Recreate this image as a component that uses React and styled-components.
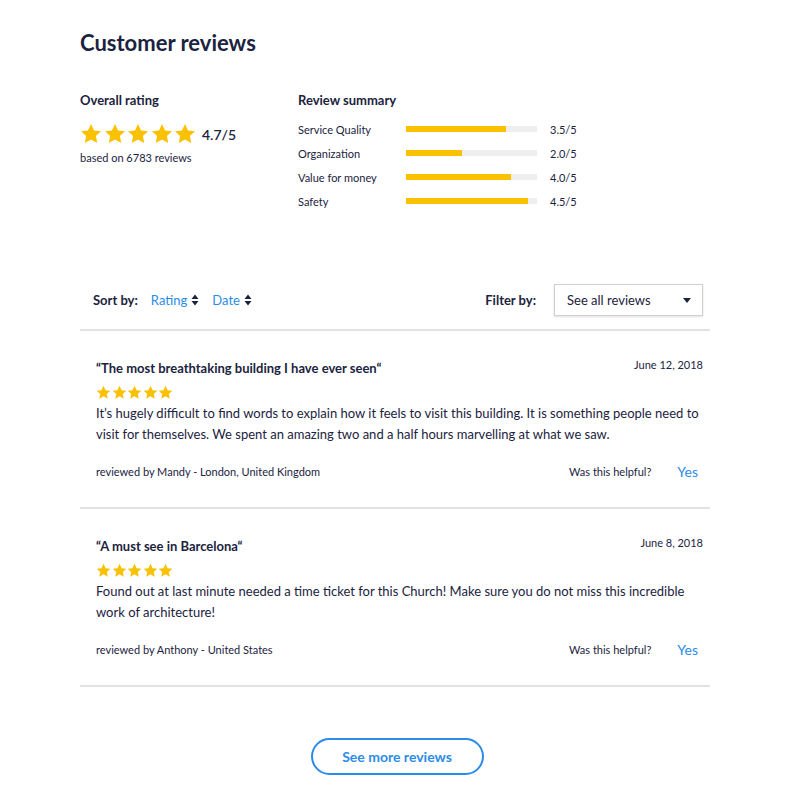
import React from 'react';
import styled, { createGlobalStyle } from 'styled-components';

const GlobalStyle = createGlobalStyle`
  body {
    margin: 0;
    background: #fff;
    font-family: "Lato", "Noto Sans", sans-serif;
    color: #1b2340;
  }
`;

const summary = [
  { label: 'Service Quality', value: '3.5/5', fill: 76 },
  { label: 'Organization', value: '2.0/5', fill: 43 },
  { label: 'Value for money', value: '4.0/5', fill: 80 },
  { label: 'Safety', value: '4.5/5', fill: 93 },
];

const reviews = [
  {
    title: '“The most breathtaking building I have ever seen“',
    date: 'June 12, 2018',
    body: 'It’s hugely difficult to find words to explain how it feels to visit this building. It is something people need to visit for themselves. We spent an amazing two and a half hours marvelling at what we saw.',
    author: 'reviewed by Mandy - London, United Kingdom',
  },
  {
    title: '“A must see in Barcelona“',
    date: 'June 8, 2018',
    body: 'Found out at last minute needed a time ticket for this Church! Make sure you do not miss this incredible work of architecture!',
    author: 'reviewed by Anthony - United States',
  },
];

const Star = ({ size }) => (
  <svg width={size} height={size} viewBox="0 0 24 24">
    <path
      fill="#f9c100"
      d="M12 1.2l3.3 7 7.6.9-5.6 5.2 1.5 7.5L12 18l-6.8 3.8 1.5-7.5L1.1 9.1l7.6-.9z"
    />
  </svg>
);

const Stars = ({ size, gap }) => (
  <StarRow $gap={gap}>
    {[0, 1, 2, 3, 4].map((i) => (
      <Star key={i} size={size} />
    ))}
  </StarRow>
);

const SortIcon = () => (
  <svg width="8" height="12" viewBox="0 0 8 12">
    <path fill="#1b2340" d="M4 0.5L7.5 5H0.5z M4 11.5L0.5 7H7.5z" />
  </svg>
);

const App = () => {
  return (
    <Page>
      <GlobalStyle />
      <Title>Customer reviews</Title>

      <Top>
        <Overall>
          <SectionHead>Overall rating</SectionHead>
          <RatingLine>
            <Stars size={22} gap={1.5} />
            <BigScore>4.7/5</BigScore>
          </RatingLine>
          <Based>based on 6783 reviews</Based>
        </Overall>

        <Summary>
          <SectionHead>Review summary</SectionHead>
          <SummaryList>
            {summary.map((s) => (
              <SummaryRow key={s.label}>
                <SummaryLabel>{s.label}</SummaryLabel>
                <Bar>
                  <BarFill style={{ width: `${s.fill}%` }} />
                </Bar>
                <SummaryValue>{s.value}</SummaryValue>
              </SummaryRow>
            ))}
          </SummaryList>
        </Summary>
      </Top>

      <Toolbar>
        <SortGroup>
          <ToolLabel>Sort by:</ToolLabel>
          <SortLink>
            Rating <SortIcon />
          </SortLink>
          <SortLink>
            Date <SortIcon />
          </SortLink>
        </SortGroup>
        <FilterGroup>
          <ToolLabel>Filter by:</ToolLabel>
          <Select>
            <span>See all reviews</span>
            <Caret />
          </Select>
        </FilterGroup>
      </Toolbar>

      {reviews.map((r) => (
        <Review key={r.date}>
          <ReviewHead>
            <ReviewTitle>{r.title}</ReviewTitle>
            <ReviewDate>{r.date}</ReviewDate>
          </ReviewHead>
          <Stars size={15} gap={0.5} />
          <ReviewBody>{r.body}</ReviewBody>
          <ReviewFoot>
            <Small>{r.author}</Small>
            <Helpful>
              <Small>Was this helpful?</Small>
              <YesLink>Yes</YesLink>
            </Helpful>
          </ReviewFoot>
        </Review>
      ))}

      <MoreWrap>
        <MoreButton>See more reviews</MoreButton>
      </MoreWrap>
    </Page>
  );
};

export default App;

const Page = styled.div`
  width: 630px;
  margin-left: 80px;
  padding-top: 28px;
  padding-bottom: 30px;
`;

const Title = styled.h1`
  margin: 0;
  font-size: 22px;
  line-height: 30px;
  font-weight: 700;
  color: #1b2340;
`;

const Top = styled.div`
  display: flex;
  margin-top: 33px;
`;

const Overall = styled.div`
  width: 218px;
`;

const SectionHead = styled.h2`
  margin: 0;
  font-size: 13px;
  line-height: 18px;
  font-weight: 700;
`;

const RatingLine = styled.div`
  display: flex;
  align-items: center;
  gap: 6px;
  margin-top: 14px;
`;

const StarRow = styled.div`
  display: flex;
  gap: ${(p) => p.$gap}px;
  svg {
    display: block;
  }
`;

const BigScore = styled.span`
  font-size: 14px;
  font-weight: 600;
`;

const Small = styled.span`
  font-size: 11px;
  line-height: 16px;
`;

const Based = styled(Small)`
  display: block;
  margin-top: 5px;
`;

const Summary = styled.div`
  flex: 1;
`;

const SummaryList = styled.div`
  display: flex;
  flex-direction: column;
  gap: 8px;
  margin-top: 12px;
`;

const SummaryRow = styled.div`
  display: flex;
  align-items: center;
  height: 16px;
  font-size: 11px;
`;

const SummaryLabel = styled.span`
  width: 108px;
`;

const Bar = styled.div`
  width: 131px;
  height: 6px;
  background: #eeeeee;
  margin-right: 13px;
`;

const BarFill = styled.div`
  height: 100%;
  background: #f9c100;
`;

const SummaryValue = styled.span``;

const Toolbar = styled.div`
  display: flex;
  justify-content: space-between;
  align-items: center;
  margin-top: 75px;
  padding: 0 7px 13px 13px;
  border-bottom: 2px solid #e2e2e2;
`;

const SortGroup = styled.div`
  display: flex;
  align-items: center;
  gap: 13px;
`;

const ToolLabel = styled.span`
  font-size: 13px;
  font-weight: 700;
`;

const SortLink = styled.span`
  display: inline-flex;
  align-items: center;
  gap: 4px;
  font-size: 13px;
  color: #2b8be8;
`;

const FilterGroup = styled.div`
  display: flex;
  align-items: center;
  gap: 18px;
`;

const Select = styled.div`
  box-sizing: border-box;
  width: 149px;
  height: 32px;
  display: flex;
  align-items: center;
  justify-content: space-between;
  padding: 0 11px 0 12px;
  border: 1px solid #cfcfcf;
  box-shadow: 0 1px 2px rgba(0, 0, 0, 0.12);
  font-size: 13px;
`;

const Caret = styled.span`
  width: 0;
  height: 0;
  border-left: 4px solid transparent;
  border-right: 4px solid transparent;
  border-top: 5px solid #1b2340;
`;

const Review = styled.div`
  padding: 27px 7px 27px 16px;
  border-bottom: 2px solid #e2e2e2;
`;

const ReviewHead = styled.div`
  display: flex;
  justify-content: space-between;
  align-items: flex-start;
  margin-bottom: 7px;
`;

const ReviewTitle = styled.h3`
  margin: 0;
  font-size: 13px;
  line-height: 20px;
  font-weight: 700;
`;

const ReviewDate = styled.span`
  font-size: 11px;
  line-height: 14px;
`;

const ReviewBody = styled.p`
  margin: 3px 0 0;
  font-size: 13px;
  line-height: 21px;
`;

const ReviewFoot = styled.div`
  display: flex;
  justify-content: space-between;
  align-items: center;
  margin-top: 18px;
`;

const Helpful = styled.div`
  display: flex;
  align-items: center;
  gap: 26px;
  padding-right: 5px;
`;

const YesLink = styled.span`
  font-size: 14px;
  color: #2b8be8;
`;

const MoreWrap = styled.div`
  display: flex;
  justify-content: center;
  margin-top: 51px;
  padding-left: 4px;
`;

const MoreButton = styled.button`
  width: 173px;
  height: 37px;
  border: 2px solid #2b8be8;
  border-radius: 19px;
  background: #fff;
  color: #2b8be8;
  font-family: inherit;
  font-size: 14px;
  font-weight: 700;
`;
